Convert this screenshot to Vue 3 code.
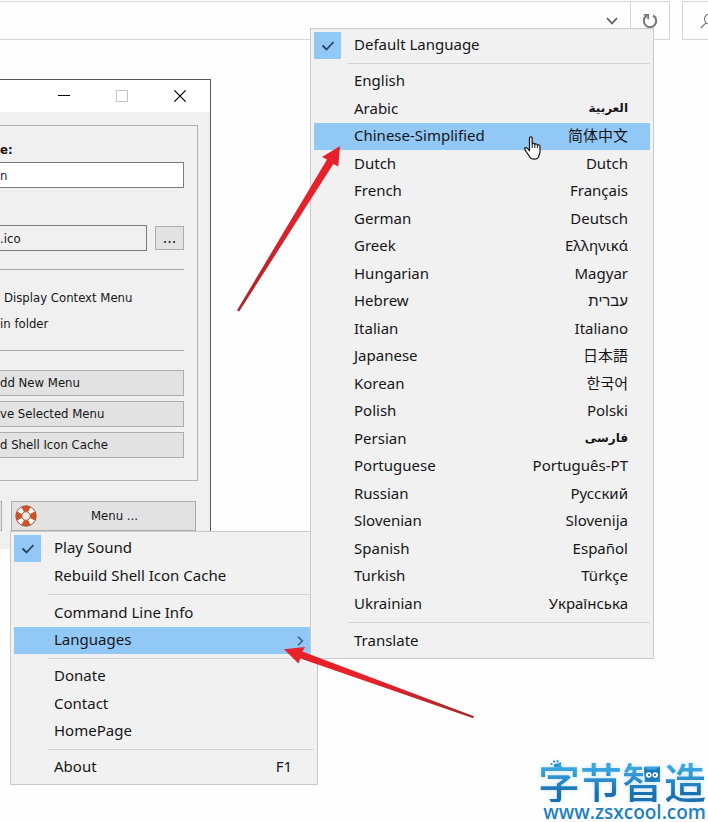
<script setup>
const topItems = [
  { label: 'Play Sound', checked: true },
  { label: 'Rebuild Shell Icon Cache' },
  { separator: true },
  { label: 'Command Line Info' },
  { label: 'Languages', active: true, submenu: true },
  { separator: true },
  { label: 'Donate' },
  { label: 'Contact' },
  { label: 'HomePage' },
  { separator: true },
  { label: 'About', hint: 'F1' }
]

const languages = [
  { label: 'Default Language', checked: true },
  { separator: true },
  { label: 'English' },
  { label: 'Arabic', hint: 'العربية', lang: 'ar' },
  { label: 'Chinese-Simplified', hint: '简体中文', lang: 'zh-CN', active: true },
  { label: 'Dutch', hint: 'Dutch', lang: 'nl' },
  { label: 'French', hint: 'Français', lang: 'fr' },
  { label: 'German', hint: 'Deutsch', lang: 'de' },
  { label: 'Greek', hint: 'Ελληνικά', lang: 'el' },
  { label: 'Hungarian', hint: 'Magyar', lang: 'hu' },
  { label: 'Hebrew', hint: 'עברית', lang: 'he' },
  { label: 'Italian', hint: 'Italiano', lang: 'it' },
  { label: 'Japanese', hint: '日本語', lang: 'ja' },
  { label: 'Korean', hint: '한국어', lang: 'ko' },
  { label: 'Polish', hint: 'Polski', lang: 'pl' },
  { label: 'Persian', hint: 'فارسى', lang: 'fa' },
  { label: 'Portuguese', hint: 'Português-PT', lang: 'pt' },
  { label: 'Russian', hint: 'Русский', lang: 'ru' },
  { label: 'Slovenian', hint: 'Slovenija', lang: 'sl' },
  { label: 'Spanish', hint: 'Español', lang: 'es' },
  { label: 'Turkish', hint: 'Türkçe', lang: 'tr' },
  { label: 'Ukrainian', hint: 'Українська', lang: 'uk' },
  { separator: true },
  { label: 'Translate' }
]
</script>

<template>
  <div class="page">
    <header class="toolbar">
      <div class="address">
        <button class="tool drop" type="button" aria-label="Previous locations">
          <svg width="12" height="8" viewBox="0 0 12 8"><path d="M1 1.2 6 6.4 11 1.2" fill="none" stroke="#666" stroke-width="1.8" /></svg>
        </button>
        <button class="tool refresh" type="button" aria-label="Refresh">
          <svg width="16" height="16" viewBox="0 0 16 16">
            <path d="M11 2.500A6.200 6.200 0 1 1 5 2.500" fill="none" stroke="#777" stroke-width="2" />
            <path d="M1.800 1.800h4.400v4.400" fill="none" stroke="#777" stroke-width="1.800" />
          </svg>
        </button>
      </div>
      <button class="search" type="button" aria-label="Search">
        <svg width="16" height="16" viewBox="0 0 16 16">
          <circle cx="9.5" cy="6" r="5" fill="none" stroke="#777" stroke-width="1.1" />
          <path d="M6 9.8.8 15" stroke="#777" stroke-width="1.2" />
        </svg>
      </button>
    </header>

    <main class="dialog">
      <div class="titlebar">
        <button type="button" aria-label="Minimize">
          <svg width="12" height="12" viewBox="0 0 12 12"><path d="M0 5.5h12" stroke="#000" /></svg>
        </button>
        <button type="button" aria-label="Maximize" disabled>
          <svg width="12" height="12" viewBox="0 0 12 12"><path d="M.5.5h11v11H.5z" fill="none" stroke="#c4c4c4" /></svg>
        </button>
        <button type="button" aria-label="Close">
          <svg width="12" height="12" viewBox="0 0 12 12"><path d="m.3.3 11.4 11.4M11.7.3.3 11.7" stroke="#000" stroke-width="1.2" /></svg>
        </button>
      </div>

      <div class="body">
        <form class="group" @submit.prevent>
          <label class="name-label" for="name">e:</label>
          <input id="name" class="field name" type="text" value="n" />
          <div class="icon-row">
            <input class="field" type="text" value=".ico" aria-label="Icon" readonly />
            <button class="btn browse" type="button">...</button>
          </div>
          <hr />
          <p class="option lead">Display Context Menu</p>
          <p class="option">in folder</p>
          <hr />
          <div class="actions">
            <button class="btn" type="button">dd New Menu</button>
            <button class="btn" type="button">ve Selected Menu</button>
            <button class="btn" type="button">d Shell Icon Cache</button>
          </div>
        </form>

        <div class="footer">
          <button class="btn stub" type="button" aria-label="Close dialog"></button>
          <div class="menu-anchor">
            <button class="btn menu-btn" type="button">
              <svg class="buoy" width="22" height="22" viewBox="0 0 22 22">
                <circle cx="11" cy="11" r="7.2" fill="none" stroke="#cf5026" stroke-width="6" />
                <g stroke="#fff" stroke-width="5.6" fill="none">
                  <path d="M14.3 4.5A7.3 7.3 0 0 1 17.5 7.7M17.5 14.3A7.3 7.3 0 0 1 14.3 17.5M7.7 17.5A7.3 7.3 0 0 1 4.5 14.3M4.5 7.7A7.3 7.3 0 0 1 7.7 4.5" />
                </g>
                <circle cx="11" cy="11" r="4.2" fill="#eee" stroke="#b5603c" />
                <circle cx="11" cy="11" r="10.2" fill="none" stroke="#a5563a" />
              </svg>
              <span>Menu ...</span>
            </button>

            <ul class="menu main-menu">
              <li v-for="(item, i) in topItems" :key="i" :class="{ sep: item.separator }">
                <button v-if="!item.separator" class="item" :class="{ active: item.active }" type="button">
                  <span class="mark" :class="{ on: item.checked }">
                    <svg v-if="item.checked" width="14" height="12" viewBox="0 0 14 12"><path d="m1.5 5.5 4 4 7-7.5" fill="none" stroke="#26425c" stroke-width="1.8" /></svg>
                  </span>
                  <span class="label">{{ item.label }}</span>
                  <span v-if="item.hint" class="hint">{{ item.hint }}</span>
                  <svg v-if="item.submenu" class="more" width="7" height="10" viewBox="0 0 7 10"><path d="m1 .8 4.4 4.2L1 9.2" fill="none" stroke="#3c5870" stroke-width="1.5" /></svg>
                </button>
                <ul v-if="item.submenu" class="menu sub-menu">
                  <li v-for="(entry, j) in languages" :key="j" :class="{ sep: entry.separator }">
                    <button v-if="!entry.separator" class="item" :class="{ active: entry.active }" type="button">
                      <span class="mark" :class="{ on: entry.checked }">
                        <svg v-if="entry.checked" width="14" height="12" viewBox="0 0 14 12"><path d="m1.5 5.5 4 4 7-7.5" fill="none" stroke="#26425c" stroke-width="1.8" /></svg>
                      </span>
                      <span class="label">{{ entry.label }}</span>
                      <span v-if="entry.hint" class="hint" :lang="entry.lang">{{ entry.hint }}</span>
                    </button>
                  </li>
                </ul>
              </li>
            </ul>
          </div>
        </div>
      </div>
    </main>

    <svg class="arrows" width="708" height="822" viewBox="0 0 708 822" aria-hidden="true">
      <defs>
        <linearGradient id="redA" gradientUnits="userSpaceOnUse" x1="238" y1="311" x2="300" y2="210"><stop offset="0" stop-color="#a8262b" /><stop offset="1" stop-color="#e6212a" /></linearGradient>
        <linearGradient id="redB" gradientUnits="userSpaceOnUse" x1="473" y1="717" x2="370" y2="680"><stop offset="0" stop-color="#a8262b" /><stop offset="1" stop-color="#e6212a" /></linearGradient>
      </defs>
      <path fill="url(#redA)" d="M340 146 322 157l5 2.500L237 310.300l2.200 1.200L333.300 164l5 2.500z" />
      <path fill="url(#redB)" d="M284 649.300 305 647l-2.700 4.500L474 716.300l-.8 2L300.300 658.500l-1.800 5z" />
      <g transform="translate(524 136)">
        <path fill="#fff" stroke="#111" stroke-width="1.2" stroke-linejoin="round" d="M5.500 14.500V2.200C5.500.3 8.200.3 8.200 2.200V8c.4-1 2.500-.8 2.600.5.600-.9 2.500-.6 2.600.8.700-.8 2.600-.4 2.600 1.200v5.300c0 2-1.200 3-1.600 5.400-1.500 2.600-6.700 2.600-8.500.2-.6-1.900-2.400-3.500-3.600-5.600-.6-1.200-1.600-2-1.600-3 0-1.300 1.600-1.700 2.600-.6z" />
        <path fill="none" stroke="#111" stroke-width="1" d="M8.200 7.500v4.500M10.800 8.500V12M13.400 9.500V12" />
      </g>
    </svg>

    <aside class="brand">
      <div class="brand-name">
        <span class="glyphs">字节智造</span>
        <svg class="paw" width="12" height="8" viewBox="0 0 12 8" fill="#2287c9"><circle cx="1.500" cy="4" r="1" /><circle cx="4" cy="1.500" r="1.100" /><circle cx="7.500" cy="1.300" r="1.100" /><circle cx="10.300" cy="3.500" r="1" /><ellipse cx="6" cy="5.500" rx="2.200" ry="1.700" /></svg>
        <svg class="cat" width="18" height="17" viewBox="0 0 18 17">
          <path d="M1 1 5.500 4Q9 2.800 12 4L17 .5 16.600 8Q16.500 15.500 9 15.500T1.300 8z" fill="#1d78b8" />
          <circle cx="5.700" cy="9" r="2.800" fill="#fff" /><circle cx="12.200" cy="9" r="2.800" fill="#fff" />
          <circle cx="6" cy="9" r="1.100" fill="#145d95" /><circle cx="11.900" cy="9" r="1.100" fill="#145d95" />
        </svg>
      </div>
      <a href="#">www.zsxcool.com</a>
    </aside>
  </div>
</template>

<style>
body {
  margin: 0;
  background: #fff;
}
</style>

<style scoped>
* {
  box-sizing: border-box;
}

.page {
  position: relative;
  min-height: 100vh;
  overflow: hidden;
  background: #fefefe;
  color: #161616;
  font-family: "Noto Sans", "Noto Sans CJK SC", sans-serif;
}

button,
input {
  margin: 0;
  padding: 0;
  border: 0;
  border-radius: 0;
  background: none;
  color: inherit;
  font: inherit;
}

svg {
  display: block;
  flex: none;
}

.toolbar {
  display: flex;
  gap: 12px;
  padding-top: 1px;
}

.address {
  display: flex;
  flex: 1;
  justify-content: flex-end;
  height: 39px;
  border: 1px solid #d5d7d7;
  border-left: 0;
}

.tool {
  display: flex;
  align-items: center;
  justify-content: center;
  width: 36px;
}

.refresh {
  width: 39px;
  border-left: 1px solid #d5d7d7;
}

.search {
  display: flex;
  align-items: center;
  width: 26px;
  padding-left: 17px;
  overflow: hidden;
  border: 1px solid #d5d7d7;
  border-right: 0;
}

.dialog {
  width: 211px;
  margin-top: 39px;
  border-top: 1px solid #5a5a5c;
  border-right: 1px solid #5a5a5c;
  background: #f0f0f1;
  font: 13px/16px "DejaVu Sans Condensed", "Noto Sans", sans-serif;
}

.titlebar {
  display: flex;
  justify-content: flex-end;
  height: 32px;
  padding-right: 1px;
  background: #fff;
}

.titlebar button {
  display: flex;
  align-items: center;
  justify-content: center;
  width: 58px;
}

.body {
  padding: 13px 0 18px;
}

.group {
  margin-right: 12px;
  padding: 16px 13px 22px 0;
  border: 1px solid #b1b1b3;
  border-left: 0;
}

.name-label {
  display: block;
  height: 20px;
  font-weight: bold;
}

.field {
  display: block;
  flex: 1;
  width: 100%;
  min-width: 0;
  height: 26px;
  border: 1px solid #7d7d80;
  border-left: 0;
}

.name {
  background: #fff;
  color: #22224a;
}

.icon-row {
  display: flex;
  align-items: center;
  gap: 8px;
  margin-top: 37px;
}

.btn {
  border: 1px solid #adadb0;
  background: #e2e2e2;
}

.browse {
  width: 29px;
  height: 24px;
  font-size: 16px;
}

hr {
  height: 1px;
  margin: 18px 0 0;
  border: 0;
  background: #a5a5a7;
}

.option {
  margin: 0;
  padding-top: 10px;
  white-space: nowrap;
}

.option.lead {
  padding: 20px 0 0 4px;
}

.actions {
  display: flex;
  flex-direction: column;
  gap: 5px;
  margin-top: 19px;
}

.actions .btn {
  height: 26px;
  border-left: 0;
  text-align: left;
}

.footer {
  display: flex;
  gap: 9px;
  margin-top: 20px;
  padding-right: 14px;
}

.stub {
  width: 2px;
  border-left: 0;
}

.menu-anchor {
  position: relative;
  flex: 1;
}

.menu-btn {
  display: flex;
  align-items: center;
  width: 100%;
  height: 30px;
  padding: 0 3px;
}

.menu-btn span {
  flex: 1;
  text-align: center;
}

.menu {
  position: absolute;
  margin: 0;
  padding: 3px;
  border: 1px solid #c9cacb;
  background: #f1f1f2;
  list-style: none;
  font: 15px/20px "Noto Sans", "Noto Sans CJK SC", sans-serif;
}

.main-menu {
  top: 100%;
  left: -1px;
  z-index: 1;
  width: 308px;
}

.sub-menu {
  bottom: -5px;
  left: calc(100% - 4px);
  width: 344px;
}

.menu li {
  position: relative;
  height: 27px;
}

.menu li:nth-child(even) {
  height: 28px;
}

.menu li.sep {
  height: 9px;
  padding: 4px 0 0 34px;
}

.menu li.sep::before {
  display: block;
  height: 1px;
  background: #d3d4d5;
  content: "";
}

.item {
  display: flex;
  align-items: center;
  width: 100%;
  height: 100%;
  padding-right: 22px;
  text-align: left;
}

.active,
.mark.on {
  background: #91c8f6;
}

.mark {
  display: flex;
  align-items: center;
  justify-content: center;
  width: 27px;
  height: 100%;
  margin-right: 13px;
}

.label,
.hint {
  padding-bottom: 3px;
}

.label {
  flex: 1;
}

.more {
  margin-right: -12px;
}

.hint:lang(ja) {
  font-family: "Noto Sans CJK JP", sans-serif;
}

.hint:lang(ko) {
  font-family: "Noto Sans CJK KR", sans-serif;
}

.hint:lang(ar),
.hint:lang(fa) {
  font: bold 12px/20px "DejaVu Sans", sans-serif;
}

.arrows {
  position: absolute;
  top: 0;
  left: 0;
  z-index: 2;
  pointer-events: none;
}

.brand {
  position: absolute;
  right: 2px;
  bottom: 0;
  display: flex;
  flex-direction: column;
  align-items: flex-end;
}

.brand-name {
  position: relative;
  filter: drop-shadow(0 0 2px #c3e4f8);
}

.glyphs {
  display: block;
  background: linear-gradient(#3aa5e0 20%, #1a6faf 80%);
  background-clip: text;
  color: transparent;
  font: 500 42px/42px "Noto Sans CJK SC", sans-serif;
}

.paw {
  position: absolute;
  top: 0;
  left: 12px;
}

.cat {
  position: absolute;
  top: 6px;
  left: 105px;
}

.brand a {
  color: #1f80c2;
  font: 600 19px/20px "Open Sans", sans-serif;
  text-decoration: none;
}
</style>
